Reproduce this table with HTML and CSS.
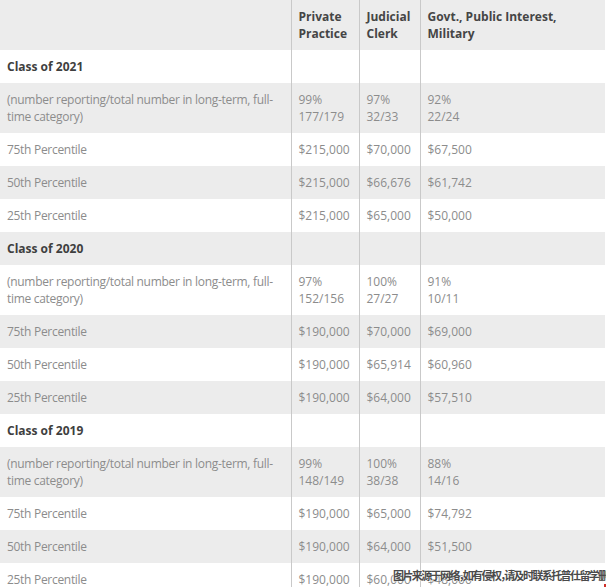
FILE: index.html
```html
<!DOCTYPE html>
<html lang="en">
<head>
<meta charset="utf-8">
<title>Salary table</title>
<link rel="stylesheet" href="styles.css">
</head>
<body>
<div class="wrap">
<table class="salary">
  <colgroup>
    <col class="c1"><col class="c2"><col class="c3"><col class="c4">
  </colgroup>
  <thead>
    <tr><th></th><th>Private Practice</th><th>Judicial Clerk</th><th>Govt., Public Interest, Military</th></tr>
  </thead>
  <tbody>
    <tr><td class="cls">Class of 2021</td><td></td><td></td><td></td></tr>
    <tr><td>(number reporting/total number in long-term, full-time category)</td><td>99%<br>177/179</td><td>97%<br>32/33</td><td>92%<br>22/24</td></tr>
    <tr><td>75th Percentile</td><td>$215,000</td><td>$70,000</td><td>$67,500</td></tr>
    <tr><td>50th Percentile</td><td>$215,000</td><td>$66,676</td><td>$61,742</td></tr>
    <tr><td>25th Percentile</td><td>$215,000</td><td>$65,000</td><td>$50,000</td></tr>
    <tr><td class="cls">Class of 2020</td><td></td><td></td><td></td></tr>
    <tr><td>(number reporting/total number in long-term, full-time category)</td><td>97%<br>152/156</td><td>100%<br>27/27</td><td>91%<br>10/11</td></tr>
    <tr><td>75th Percentile</td><td>$190,000</td><td>$70,000</td><td>$69,000</td></tr>
    <tr><td>50th Percentile</td><td>$190,000</td><td>$65,914</td><td>$60,960</td></tr>
    <tr><td>25th Percentile</td><td>$190,000</td><td>$64,000</td><td>$57,510</td></tr>
    <tr><td class="cls">Class of 2019</td><td></td><td></td><td></td></tr>
    <tr><td>(number reporting/total number in long-term, full-time category)</td><td>99%<br>148/149</td><td>100%<br>38/38</td><td>88%<br>14/16</td></tr>
    <tr><td>75th Percentile</td><td>$190,000</td><td>$65,000</td><td>$74,792</td></tr>
    <tr><td>50th Percentile</td><td>$190,000</td><td>$64,000</td><td>$51,500</td></tr>
    <tr><td>25th Percentile</td><td>$190,000</td><td>$60,000</td><td>$48,000</td></tr>
  </tbody>
</table>
<span class="watermark">图片来源于网络，如有侵权，请及时联系托普仕留学删除</span>
<span class="corner-mark"></span>
</div>
</body>
</html>
```
FILE: styles.css
```css
html, body {
  margin: 0;
  padding: 0;
  background: #fff;
  overflow: hidden;
}
.wrap {
  position: relative;
  width: 606px;
  height: 587px;
  overflow: hidden;
}
.salary {
  border-collapse: collapse;
  table-layout: fixed;
  width: 605px;
  font-family: "Open Sans", "Liberation Sans", sans-serif;
  font-size: 12px;
  line-height: 17px;
  color: #8c8c8c;
}
.c1 { width: 291px; }
.c2 { width: 68px; }
.c3 { width: 61px; }
.c4 { width: 185px; }
.salary th, .salary td {
  padding: 8px 7px;
  text-align: left;
  vertical-align: top;
  border-left: 1px solid #c9c9c9;
}
.salary th:first-child, .salary td:first-child {
  border-left: none;
}
.salary td:first-child {
  letter-spacing: -0.3px;
}
.salary th {
  font-weight: 700;
  color: #454545;
}
.salary thead tr { background: #ececec; }
.salary tbody tr:nth-child(even) { background: #ececec; }
.salary tbody tr:nth-child(odd) { background: #fff; }
.salary td.cls {
  font-weight: 700;
  color: #3f3f3f;
  letter-spacing: 0;
}
.watermark {
  position: absolute;
  left: 393px;
  top: 569px;
  font-family: "Noto Sans CJK SC", sans-serif;
  font-size: 11px;
  font-weight: 700;
  line-height: 12px;
  letter-spacing: -1.6px;
  font-feature-settings: "halt";
  color: #4a4a4a;
  white-space: nowrap;
  text-shadow: 0 0 2px #fff, 0 0 1px #fff;
}
.corner-mark {
  position: absolute;
  right: 0;
  bottom: 0;
  width: 2px;
  height: 3px;
  background: #d0302a;
}
```
